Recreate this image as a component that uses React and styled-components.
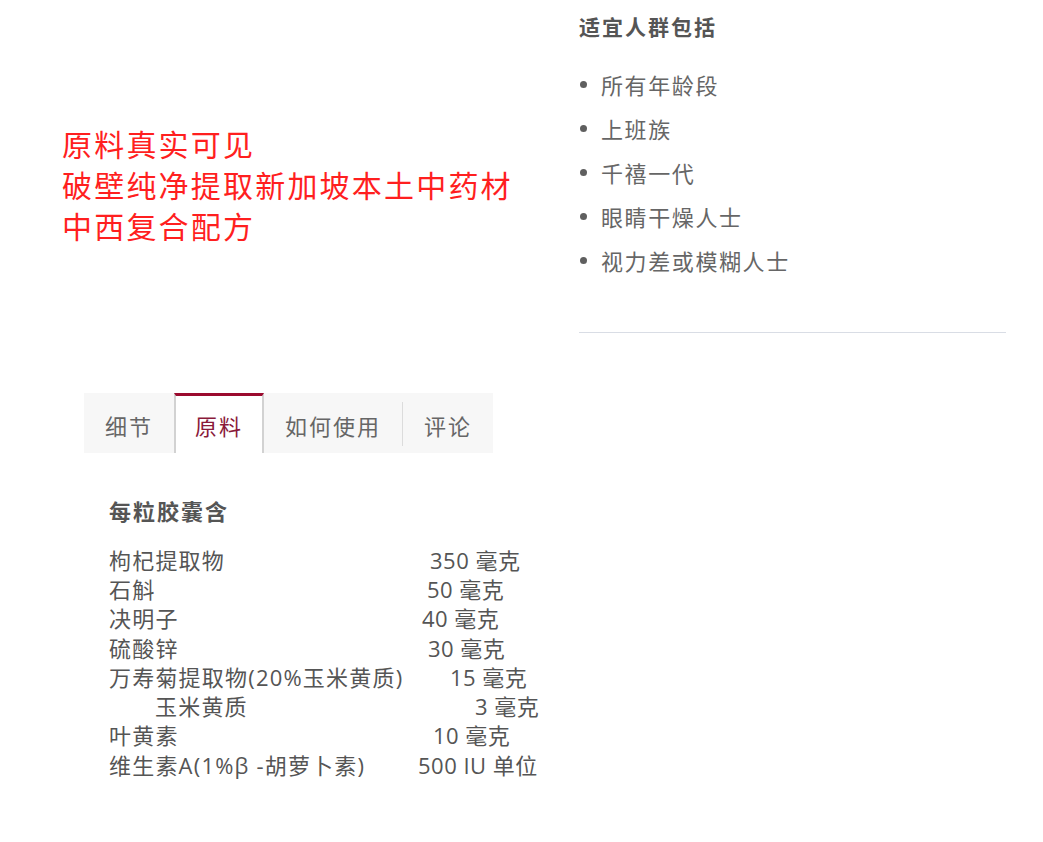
import React from "react";
import styled, { createGlobalStyle } from "styled-components";

const GlobalStyle = createGlobalStyle`
  html, body {
    margin: 0;
    padding: 0;
    background: #fff;
  }
  body {
    font-family: "Open Sans", "Noto Sans CJK SC", sans-serif;
    color: #555;
  }
`;

const Page = styled.div`
  width: 1043px;
  min-height: 842px;
`;

const Top = styled.section`
  display: flex;
  align-items: flex-start;
`;

const Slogan = styled.div`
  width: 517px;
  padding: 123px 0 0 62px;
  color: #ff1f1f;
  font-family: "Noto Sans CJK SC", sans-serif;
  font-size: 30px;
  line-height: 41px;
  letter-spacing: 2.2px;
`;

const Audience = styled.div`
  width: 427px;
  padding-top: 11px;
`;

const Heading = styled.h3`
  margin: 0;
  font-family: "Noto Sans CJK SC", sans-serif;
  font-size: 21px;
  line-height: 30px;
  font-weight: 700;
  letter-spacing: 2px;
  color: #555;
`;

const Bullets = styled.ul`
  list-style: none;
  margin: 21px 0 0;
  padding: 0;
`;

const Bullet = styled.li`
  display: flex;
  align-items: center;
  height: 44px;
  font-family: "Noto Sans CJK SC", sans-serif;
  font-size: 22px;
  letter-spacing: 1.6px;
  color: #666;

  &::before {
    content: "";
    width: 7px;
    height: 7px;
    margin: 0 14px 0 1px;
    border-radius: 50%;
    background: #5f5f5f;
  }
`;

const Rule = styled.hr`
  margin: 50px 0 0;
  border: 0;
  border-top: 1px solid #d9dde5;
`;

const Details = styled.section`
  margin: 60px 0 0 84px;
`;

const Tabs = styled.div`
  display: inline-flex;
  height: 60px;
  background: #f7f7f7;
`;

const Tab = styled.div`
  position: relative;
  display: flex;
  align-items: center;
  padding: 0 ${(p) => (p.$active ? "19px" : "21px")};
  box-sizing: border-box;
  font-family: "Noto Sans CJK SC", sans-serif;
  font-size: 22px;
  letter-spacing: 2px;
  color: ${(p) => (p.$active ? "#8a1a3a" : "#666")};
  background: ${(p) => (p.$active ? "#fff" : "transparent")};
  border-top: 3px solid ${(p) => (p.$active ? "#9b0a2e" : "transparent")};
  border-left: ${(p) => (p.$active ? "2px solid #d2d2d2" : "0")};
  border-right: ${(p) => (p.$active ? "2px solid #d2d2d2" : "0")};

  ${(p) =>
    p.$divider &&
    `
    margin-left: 1px;
    &::before {
      content: "";
      position: absolute;
      left: -1px;
      top: 6px;
      bottom: 7px;
      width: 1px;
      background: #dcdcdc;
    }
  `}
`;

const Panel = styled.div`
  padding: 42px 0 0 25px;
`;

const PanelTitle = styled(Heading)`
  font-size: 22px;
  letter-spacing: 2px;
`;

const Ingredients = styled.div`
  margin-top: 19px;
`;

const Row = styled.div`
  display: flex;
  height: 29.3px;
  align-items: center;
  font-size: 22px;
  color: #555;
  white-space: nowrap;
`;

const Name = styled.span`
  width: ${(p) => p.$at - p.$indent}px;
  padding-left: ${(p) => p.$indent}px;
  flex: none;
  letter-spacing: 1.2px;
`;

const Amount = styled.span`
  letter-spacing: 0.5px;
`;

const audience = ["所有年龄段", "上班族", "千禧一代", "眼睛干燥人士", "视力差或模糊人士"];

const tabs = ["细节", "原料", "如何使用", "评论"];

const items = [
  { name: "枸杞提取物", amount: "350 毫克", at: 321 },
  { name: "石斛", amount: "50 毫克", at: 318 },
  { name: "决明子", amount: "40 毫克", at: 313 },
  { name: "硫酸锌", amount: "30 毫克", at: 319 },
  { name: "万寿菊提取物(20%玉米黄质)", amount: "15 毫克", at: 341 },
  { name: "玉米黄质", amount: "3 毫克", at: 366, indent: 46 },
  { name: "叶黄素", amount: "10 毫克", at: 324 },
  { name: "维生素A(1%β -胡萝卜素)", amount: "500 IU 单位", at: 309 },
];

export default function App() {
  return (
    <Page>
      <GlobalStyle />
      <Top>
        <Slogan>
          <div>原料真实可见</div>
          <div>破壁纯净提取新加坡本土中药材</div>
          <div>中西复合配方</div>
        </Slogan>
        <Audience>
          <Heading>适宜人群包括</Heading>
          <Bullets>
            {audience.map((a) => (
              <Bullet key={a}>{a}</Bullet>
            ))}
          </Bullets>
          <Rule />
        </Audience>
      </Top>

      <Details>
        <Tabs>
          {tabs.map((t, i) => (
            <Tab key={t} $active={i === 1} $divider={i === 3}>
              {t}
            </Tab>
          ))}
        </Tabs>
        <Panel>
          <PanelTitle>每粒胶囊含</PanelTitle>
          <Ingredients>
            {items.map((it) => (
              <Row key={it.name}>
                <Name $at={it.at} $indent={it.indent || 0}>
                  {it.name}
                </Name>
                <Amount>{it.amount}</Amount>
              </Row>
            ))}
          </Ingredients>
        </Panel>
      </Details>
    </Page>
  );
}
